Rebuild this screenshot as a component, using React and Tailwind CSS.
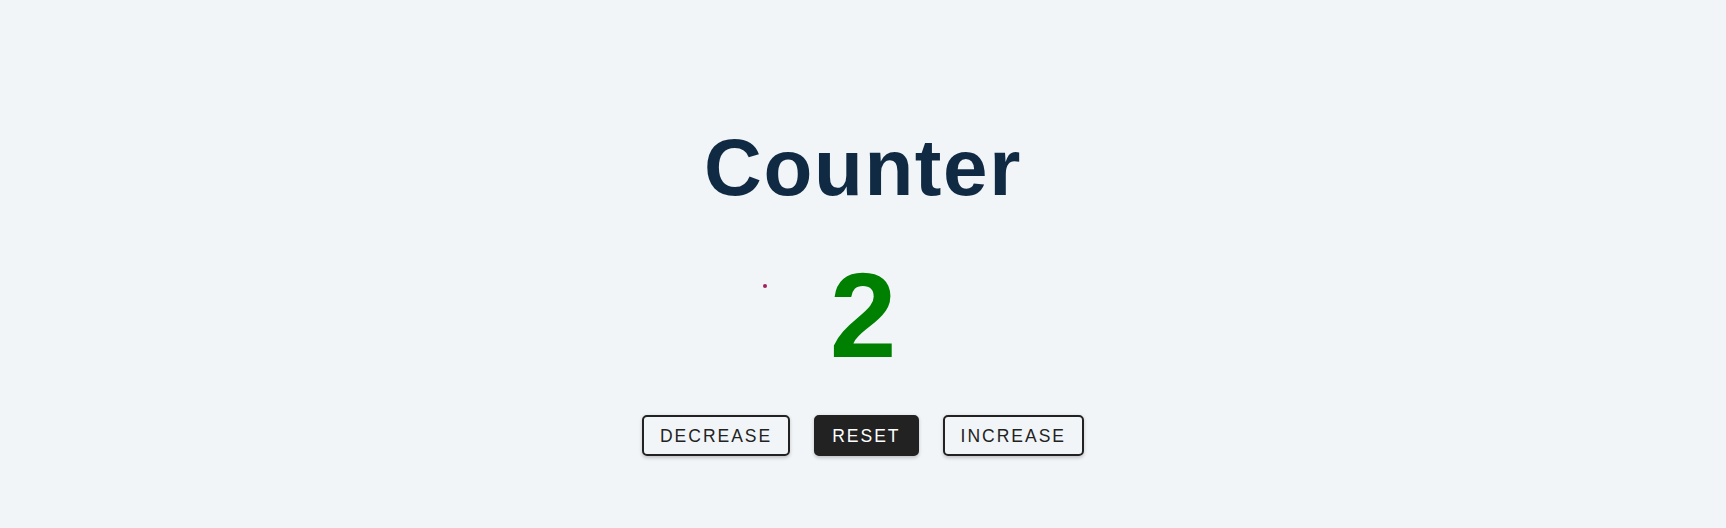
import React, { useState } from 'react';

const btnBase =
  "uppercase text-[17.5px] leading-[20px] tracking-[2px] px-[16px] py-[8.5px] border-2 border-[#222222] rounded-[5px] shadow-[0_1.25px_3.75px_rgba(0,0,0,0.2)] cursor-pointer";

const App = () => {
  const [count, setCount] = useState(2);

  const color = count > 0 ? 'text-[#008000]' : count < 0 ? 'text-[#ff0000]' : 'text-[#222222]';

  return (
    <div className="min-h-screen bg-[#f1f5f8] font-['Liberation_Sans',Arial,sans-serif] relative">
      <main className="flex flex-col items-center pt-[122px]">
        <h1 className="text-[80px] leading-[92px] font-bold tracking-[1.6px] text-[#102a43] m-0">Counter</h1>
        <span className={`mt-[32px] text-[120px] leading-[138px] font-bold ${color}`}>{count}</span>
        <div className="mt-[31px] flex gap-[24px]">
          <button className={`${btnBase} bg-transparent text-[#222222]`} onClick={() => setCount(count - 1)}>
            decrease
          </button>
          <button className={`${btnBase} bg-[#222222] text-white`} onClick={() => setCount(0)}>
            reset
          </button>
          <button className={`${btnBase} bg-transparent text-[#222222]`} onClick={() => setCount(count + 1)}>
            increase
          </button>
        </div>
      </main>
      {/* stray cursor dot */}
      <span className="absolute left-[763px] top-[284px] w-[4px] h-[4px] rounded-full bg-[#a3205e]"></span>
    </div>
  );
};

export default App;
